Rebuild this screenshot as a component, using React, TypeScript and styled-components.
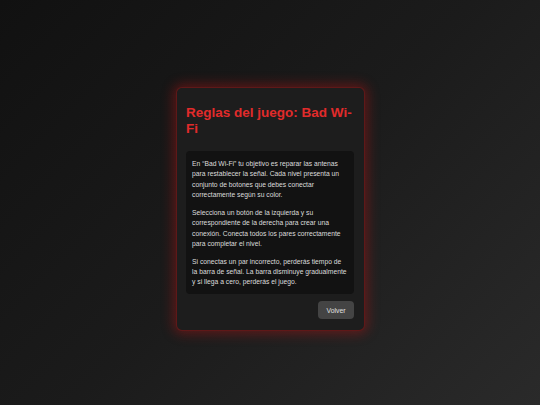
import React from "react";
import styled, { createGlobalStyle } from "styled-components";

const Global = createGlobalStyle`
  html, body { margin: 0; padding: 0; }
  body {
    width: 540px;
    height: 405px;
    overflow: hidden;
    font-family: "Liberation Sans", Arial, sans-serif;
    background: linear-gradient(135deg, #111111 0%, #1b1b1b 50%, #2a2a2a 100%);
  }
`;

const Page = styled.div`
  width: 540px;
  height: 405px;
  display: flex;
  align-items: flex-start;
  justify-content: center;
  box-sizing: border-box;
  padding-top: 87px;
  padding-left: 1px;
`;

const Card = styled.div`
  width: 189px;
  box-sizing: border-box;
  background: #1d1d1d;
  border-radius: 6px;
  border: 1px solid rgba(150, 20, 20, 0.55);
  box-shadow: 0 0 12px 3px rgba(190, 20, 20, 0.4);
  padding: 17px 10px 11px 9px;
  display: flex;
  flex-direction: column;
`;

const Title = styled.h2`
  margin: 0 0 15px 0;
  color: #e12b2b;
  font-size: 13.5px;
  line-height: 15.5px;
  font-weight: 700;
`;

const RulesBox = styled.div`
  height: 143px;
  overflow: hidden;
  background: #121212;
  border-radius: 4px;
  padding: 8px 6px 0 6px;
  box-sizing: border-box;
`;

const Para = styled.p`
  margin: 0 0 7.2px 0;
  color: #dcdcdc;
  font-size: 6.75px;
  line-height: 10.4px;
`;

const Footer = styled.div`
  display: flex;
  justify-content: flex-end;
  margin-top: 7px;
`;

const Button = styled.button`
  height: 18px;
  padding: 0 8.5px;
  border: none;
  border-radius: 4px;
  background: #444444;
  color: #e0e0e0;
  font-family: "Liberation Sans", Arial, sans-serif;
  font-size: 6.8px;
  cursor: pointer;
`;

export default function App() {
  return (
    <>
      <Global />
      <Page>
        <Card>
          <Title>Reglas del juego: Bad Wi-Fi</Title>
          <RulesBox>
            <Para>
              En “Bad Wi-Fi” tu objetivo es reparar las antenas para restablecer la señal. Cada nivel
              presenta un conjunto de botones que debes conectar correctamente según su color.
            </Para>
            <Para>
              Selecciona un botón de la izquierda y su correspondiente de la derecha para crear una
              conexión. Conecta todos los pares correctamente para completar el nivel.
            </Para>
            <Para>
              Si conectas un par incorrecto, perderás tiempo de la barra de señal. La barra disminuye
              gradualmente y si llega a cero, perderás el juego.
            </Para>
          </RulesBox>
          <Footer>
            <Button>Volver</Button>
          </Footer>
        </Card>
      </Page>
    </>
  );
}
